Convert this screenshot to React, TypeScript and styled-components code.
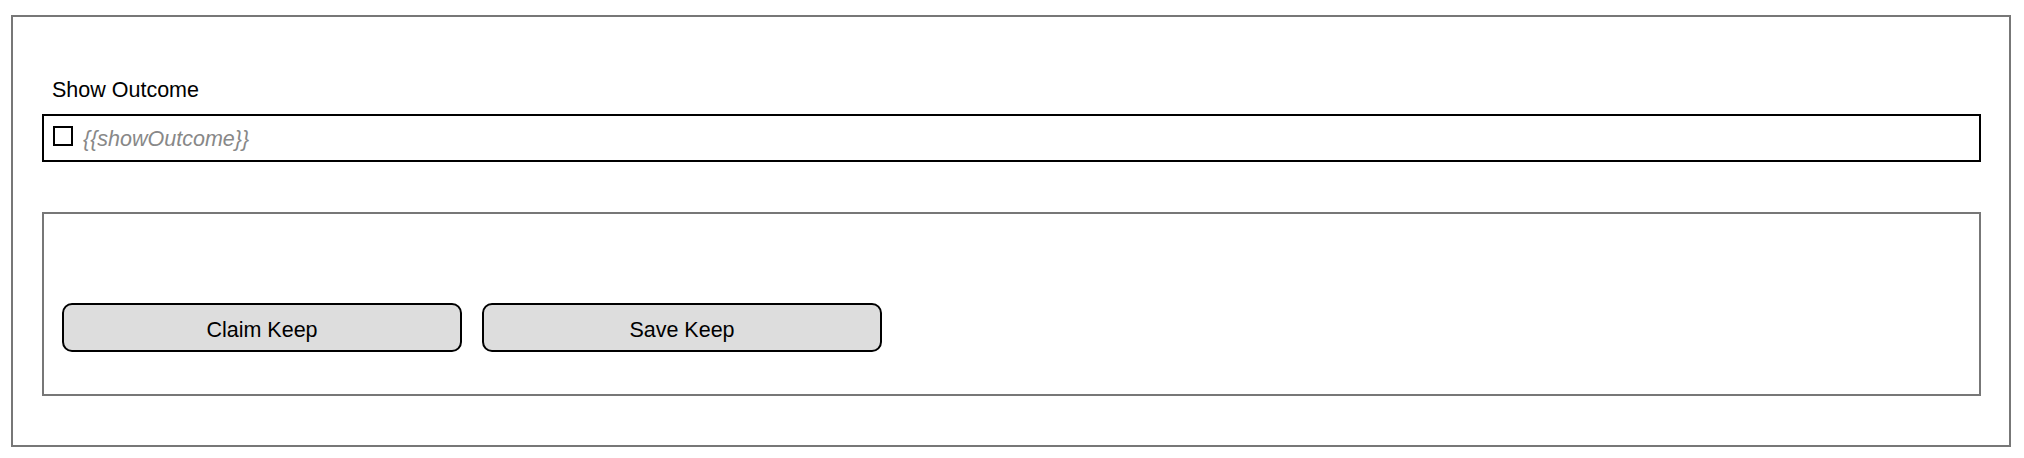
import React from "react";
import styled, { createGlobalStyle } from "styled-components";

const Global = createGlobalStyle`
  html, body { margin: 0; padding: 0; background: #fff; }
  body { font-family: "Liberation Sans", Arial, sans-serif; }
`;

const Frame = styled.div`
  box-sizing: border-box;
  margin: 15px 0 0 11px;
  width: 2000px;
  height: 432px;
  border: 2px solid #777;
  padding: 61px 28px 0 29px;
  display: flex;
  flex-direction: column;
`;

const Field = styled.div`
  display: flex;
  flex-direction: column;
`;

const Label = styled.div`
  padding-left: 10px;
  font-size: 21.5px;
  line-height: 24px;
  color: #000;
  margin-bottom: 12px;
`;

const InputBox = styled.label`
  box-sizing: border-box;
  height: 48px;
  border: 2px solid #000;
  padding: 10px 9px;
  display: flex;
  align-items: flex-start;
  gap: 10px;
`;

const Check = styled.input`
  appearance: none;
  margin: 0;
  box-sizing: border-box;
  width: 20px;
  height: 20px;
  border: 2px solid #000;
  background: #fff;
  flex: none;
`;

const Placeholder = styled.span`
  font-style: italic;
  font-size: 21.5px;
  line-height: 24px;
  margin-top: 1px;
  color: #888;
`;

const Panel = styled.div`
  box-sizing: border-box;
  margin-top: 50px;
  height: 184px;
  border: 2px solid #777;
  padding: 0 18px 42px;
  display: flex;
  align-items: flex-end;
  gap: 20px;
`;

const Button = styled.button`
  box-sizing: border-box;
  width: 400px;
  height: 49px;
  border: 2px solid #000;
  border-radius: 10px;
  background: #dddddd;
  font-family: "Liberation Sans", Arial, sans-serif;
  font-size: 21.5px;
  line-height: 24px;
  color: #000;
  padding: 4px 0 0;
  display: flex;
  align-items: center;
  justify-content: center;
`;

export default function App() {
  return (
    <>
      <Global />
      <Frame>
        <Field>
          <Label>Show Outcome</Label>
          <InputBox>
            <Check type="checkbox" />
            <Placeholder>{"{{showOutcome}}"}</Placeholder>
          </InputBox>
        </Field>
        <Panel>
          <Button>Claim Keep</Button>
          <Button>Save Keep</Button>
        </Panel>
      </Frame>
    </>
  );
}
